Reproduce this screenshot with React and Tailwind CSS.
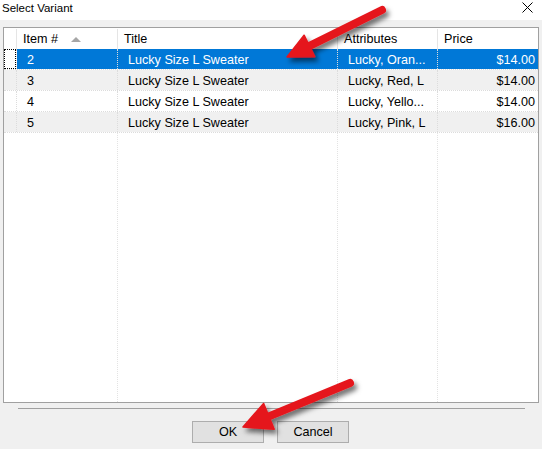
import React from 'react';

const rows = [
  { id: '2', title: 'Lucky Size L Sweater', attrs: 'Lucky, Oran...', price: '$14.00', selected: true },
  { id: '3', title: 'Lucky Size L Sweater', attrs: 'Lucky, Red, L', price: '$14.00' },
  { id: '4', title: 'Lucky Size L Sweater', attrs: 'Lucky, Yello...', price: '$14.00' },
  { id: '5', title: 'Lucky Size L Sweater', attrs: 'Lucky, Pink, L', price: '$16.00' },
];

const Arrow = ({ tail, tip, half = 12, len = 25 }) => {
  const dx = tail[0] - tip[0];
  const dy = tail[1] - tip[1];
  const n = Math.hypot(dx, dy);
  const ux = dx / n;
  const uy = dy / n;
  const bx = tip[0] + ux * len;
  const by = tip[1] + uy * len;
  const px = -uy * half;
  const py = ux * half;
  const pts = `${tip[0]},${tip[1]} ${bx + px},${by + py} ${bx - px},${by - py}`;
  return (
    <g filter="url(#shadow)">
      <line x1={tail[0]} y1={tail[1]} x2={bx - ux * 2} y2={by - uy * 2} stroke="#e5161c" strokeWidth="8" strokeLinecap="round" />
      <polygon points={pts} fill="#e5161c" stroke="#e5161c" strokeWidth="1.5" strokeLinejoin="round" />
    </g>
  );
};

export default function App() {
  return (
    <div
      className="relative w-[542px] h-[449px] bg-[#f0f0f0] overflow-hidden text-black"
      style={{ fontFamily: '"Liberation Sans", Arial, sans-serif' }}
    >
      {/* title bar */}
      <div className="h-[20px] bg-white flex items-start justify-between pl-[2px] pr-[9px] pt-[2px]">
        <span className="text-[11.5px] leading-[12px]">Select Variant</span>
        <svg width="11" height="11" viewBox="0 0 11 11">
          <path d="M0.5 0.5 L10.5 10.5 M10.5 0.5 L0.5 10.5" stroke="#000" strokeWidth="1" />
        </svg>
      </div>

      {/* grid */}
      <div className="mt-[7px] mx-[3px] h-[376px] border border-[#a0a0a0] bg-white flex flex-col text-[12.6px]">
        <div className="flex h-[21px] shrink-0 bg-white pt-[1px]">
          <div className="w-[13px] border-r border-[#e5e5e5]" />
          <div className="w-[101px] border-r border-[#e5e5e5] flex items-center pl-[6px] gap-[13px]">
            <span>Item #</span>
            <svg width="10" height="5" viewBox="0 0 10 5">
              <path d="M0 5 L5 0 L10 5 Z" fill="#a6a6a6" />
            </svg>
          </div>
          <div className="w-[220px] border-r border-[#e5e5e5] flex items-center pl-[6px]">Title</div>
          <div className="w-[100px] border-r border-[#e5e5e5] flex items-center pl-[6px]">Attributes</div>
          <div className="w-[100px] flex items-center pl-[6px]">Price</div>
        </div>

        {rows.map((r, i) => {
          const bg = r.selected ? 'bg-[#0078d7] text-white' : i % 2 === 1 ? 'bg-[#f0f0f0]' : 'bg-white';
          const rowHead = r.selected ? 'bg-white' : i % 2 === 1 ? 'bg-[#f0f0f0]' : 'bg-white';
          return (
            <div key={r.id} className="flex h-[21px] shrink-0 border-b border-dotted border-[#dcdcdc]">
              <div className={`w-[13px] border-r border-dotted border-[#dcdcdc] flex items-stretch ${rowHead}`}>
                {r.selected && <div className="w-full border border-dotted border-black" />}
              </div>
              <div className={`w-[101px] border-r border-dotted border-[#dcdcdc] flex items-center pl-[10px] pt-[2px] ${bg}`}>{r.id}</div>
              <div className={`w-[220px] border-r border-dotted border-[#dcdcdc] flex items-center pl-[10px] pt-[2px] ${bg}`}>{r.title}</div>
              <div className={`w-[100px] border-r border-dotted border-[#dcdcdc] flex items-center pl-[10px] pt-[2px] ${bg}`}>{r.attrs}</div>
              <div className={`w-[100px] flex items-center justify-end pr-[3px] pt-[2px] ${bg}`}>{r.price}</div>
            </div>
          );
        })}

        <div className="flex flex-1">
          <div className="w-[13px]" />
          <div className="w-[101px] border-r border-dotted border-[#e3e3e3]" />
          <div className="w-[220px] border-r border-dotted border-[#e3e3e3]" />
          <div className="w-[100px] border-r border-dotted border-[#e3e3e3]" />
          <div className="w-[100px]" />
        </div>
      </div>

      {/* separator */}
      <div className="mt-[5px] ml-[18px] w-[507px] border-t border-[#a0a0a0]" />

      {/* buttons */}
      <div className="mt-[12px] flex justify-center gap-[13px] pr-[1px]">
        <button className="w-[72px] h-[22px] bg-[#e1e1e1] border border-[#adadad] text-[12.6px] leading-none pt-[1px]">OK</button>
        <button className="w-[72px] h-[22px] bg-[#e1e1e1] border border-[#adadad] text-[12.6px] leading-none pt-[1px]">Cancel</button>
      </div>

      {/* annotation arrows */}
      <svg className="absolute inset-0 pointer-events-none" width="542" height="449" viewBox="0 0 542 449">
        <defs>
          <filter id="shadow" x="-20%" y="-20%" width="140%" height="160%">
            <feDropShadow dx="3" dy="4" stdDeviation="2.5" floodColor="#000" floodOpacity="0.55" />
          </filter>
        </defs>
        <Arrow tail={[382, 10]} tip={[287, 57]} half={12} len={25} />
        <Arrow tail={[350, 383]} tip={[243, 427]} half={14} len={28} />
      </svg>
    </div>
  );
}
